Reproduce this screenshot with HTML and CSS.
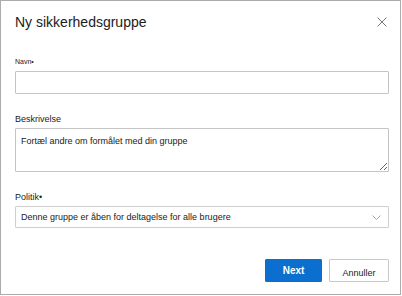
FILE: index.html
```html
<!DOCTYPE html>
<html lang="da">
<head>
<meta charset="utf-8">
<title>Ny sikkerhedsgruppe</title>
<link rel="stylesheet" href="styles.css">
</head>
<body>
<div class="dialog">
  <div class="header">
    <h1 class="title">Ny sikkerhedsgruppe</h1>
    <svg class="close" width="10" height="10" viewBox="0 0 10 10" aria-label="Luk">
      <path d="M0.5 0.5 L9.5 9.5 M9.5 0.5 L0.5 9.5" stroke="#7a7a7a" stroke-width="1" fill="none"/>
    </svg>
  </div>
  <div class="form">
    <div class="field">
      <label class="label label-small">Navn•</label>
      <input class="input" type="text">
    </div>
    <div class="field">
      <label class="label">Beskrivelse</label>
      <textarea class="textarea" placeholder="Fortæl andre om formålet med din gruppe"></textarea>
    </div>
    <div class="field">
      <label class="label">Politik•</label>
      <div class="select">
        <span class="select-text">Denne gruppe er åben for deltagelse for alle brugere</span>
        <svg class="chevron" width="9" height="5" viewBox="0 0 9 5">
          <path d="M0.5 0.5 L4.5 4.5 L8.5 0.5" stroke="#a8a8a8" stroke-width="1" fill="none"/>
        </svg>
      </div>
    </div>
  </div>
  <div class="actions">
    <button class="btn btn-primary">Next</button>
    <button class="btn btn-secondary"><span>Annuller</span></button>
  </div>
</div>
</body>
</html>
```

FILE: styles.css
```css
html, body {
  margin: 0;
  padding: 0;
  background: #ffffff;
}

body {
  font-family: "Liberation Sans", Arial, sans-serif;
  color: #222222;
}

.dialog {
  width: 401px;
  height: 295px;
  box-sizing: border-box;
  border: 1px solid #ababab;
  padding: 0 11px 12px 14px;
  display: flex;
  flex-direction: column;
  background: #ffffff;
}

.header {
  display: flex;
  justify-content: space-between;
  align-items: flex-start;
  margin-top: 11px;
  height: 20px;
}

.title {
  margin: 0;
  font-size: 14px;
  line-height: 20px;
  font-weight: normal;
  color: #1b1b1b;
}

.close {
  margin-top: 5px;
  margin-right: 2px;
  display: block;
}

.form {
  display: flex;
  flex-direction: column;
  gap: 19px;
  margin-top: 24px;
}

.field {
  display: flex;
  flex-direction: column;
}

.label {
  font-size: 9px;
  line-height: 12px;
  margin-bottom: 3px;
  color: #222222;
}

.label-small {
  font-size: 7px;
}

.input {
  height: 23px;
  box-sizing: border-box;
  border: 1px solid #c4c4c4;
  border-radius: 1px;
  margin: 0;
  padding: 0 6px;
  font-family: inherit;
  font-size: 9px;
  outline: none;
}

.textarea {
  height: 44px;
  box-sizing: border-box;
  border: 1px solid #c4c4c4;
  border-radius: 1px;
  margin: 0;
  padding: 6px 5px;
  font-family: inherit;
  font-size: 9px;
  line-height: 12px;
  color: #222222;
  outline: none;
  display: block;
}

.textarea::placeholder {
  color: #222222;
  opacity: 1;
}

.select {
  height: 22px;
  box-sizing: border-box;
  border: 1px solid #cfcfcf;
  border-radius: 1px;
  padding: 0 7px 0 5px;
  display: flex;
  align-items: center;
  justify-content: space-between;
  font-size: 9px;
  color: #222222;
}

.chevron {
  display: block;
}

.actions {
  margin-top: auto;
  display: flex;
  justify-content: flex-end;
  gap: 7px;
}

.btn {
  height: 23px;
  box-sizing: border-box;
  margin: 0;
  font-family: inherit;
  border-radius: 1px;
  padding: 0;
  cursor: pointer;
}

.btn-primary {
  width: 57px;
  background: #0a6fce;
  border: 1px solid #0a6fce;
  color: #ffffff;
  font-size: 10px;
  font-weight: bold;
}

.btn-secondary {
  width: 60px;
  background: #ffffff;
  border: 1px solid #c8c8c8;
  color: #222222;
  font-size: 9px;
}

.btn-secondary span {
  position: relative;
  top: 2px;
}
```
